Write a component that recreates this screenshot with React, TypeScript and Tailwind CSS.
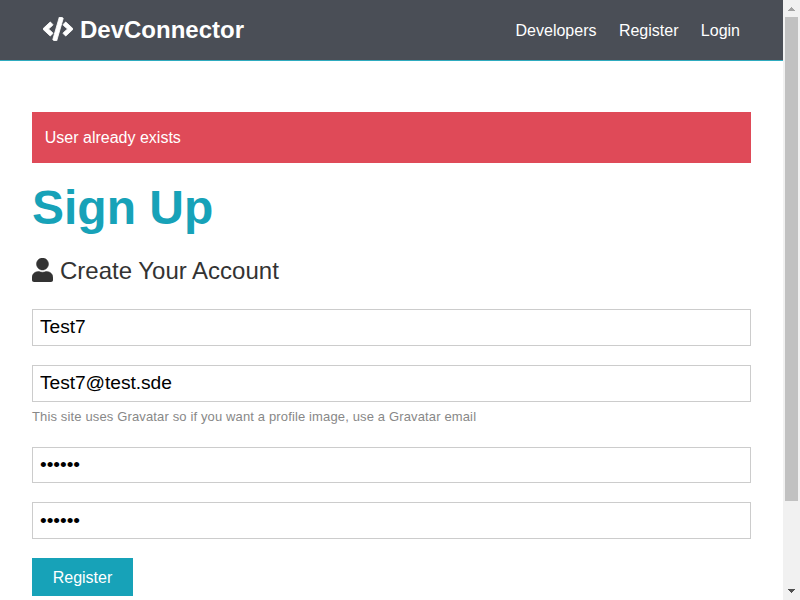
import { FaCode, FaUser } from "react-icons/fa";

const links = ["Developers", "Register", "Login"];
const inputClass =
  "block w-full border border-[#cccccc] bg-white px-[7px] text-[19.2px] leading-[22px] tracking-[-0.05px] text-black outline-none";

function Navbar() {
  return (
    <nav className="flex h-[61px] items-center justify-between border-b border-[#2eabbf] bg-[#4a4e56] px-[43px] text-white">
      <h1 className="flex items-center text-2xl font-bold">
        <FaCode className="mr-[7px] mb-[2px] h-6 w-[30px]" stroke="currentColor" strokeWidth={18} />
        DevConnector
      </h1>
      <ul className="flex gap-[22.4px] pt-[2px] text-base">
        {links.map((link) => (
          <li key={link}>
            <a>{link}</a>
          </li>
        ))}
      </ul>
    </nav>
  );
}

function Scrollbar() {
  return (
    <div className="flex w-[17px] shrink-0 flex-col items-center justify-between bg-[#f1f1f1]">
      <svg className="h-[17px] w-[17px] shrink-0" viewBox="0 0 17 17" shapeRendering="crispEdges">
        <path d="M8 7h1v1h1v1h1v1h1v1H5v-1h1V9h1V8h1z" fill="#a3a3a3" />
      </svg>
      <div className="mb-auto h-[484px] w-[13px] bg-[#c1c1c1]" />
      <svg className="h-[17px] w-[17px] shrink-0" viewBox="0 0 17 17" shapeRendering="crispEdges">
        <path d="M5 6h7v1h-1v1h-1v1H9v1H8V9H7V8H6V7H5z" fill="#505050" />
      </svg>
    </div>
  );
}

export default function App() {
  return (
    <div className="flex h-[600px] w-[800px] overflow-hidden bg-white font-['Liberation_Sans',Arial,sans-serif] text-[#333333]">
      <div className="min-w-0 flex-1">
        <Navbar />
        <main className="px-8 pt-[51px]">
          <div className="flex h-[51px] items-center bg-[#df4a58] px-[12.8px] text-base text-white">
            User already exists
          </div>
          <h1 className="mt-4 text-5xl font-bold leading-[57.6px] text-[#17a2b8]">Sign Up</h1>
          <p className="mt-[15px] flex h-[38px] items-center text-2xl">
            <FaUser className="mr-[7px] mb-[2px] h-6 w-[21px]" stroke="currentColor" strokeWidth={10} />
            Create Your Account
          </p>
          <form className="mt-[19px]">
            <input type="text" defaultValue="Test7" className={`${inputClass} h-[37px]`} />
            <input type="text" defaultValue="Test7@test.sde" className={`${inputClass} mt-[19px] h-[37px]`} />
            <small className="mt-[5px] block h-5 text-[13px] leading-5 tracking-[0.14px] text-[#888888]">
              This site uses Gravatar so if you want a profile image, use a Gravatar email
            </small>
            <input type="password" defaultValue="secret" className={`${inputClass} mt-5 h-9`} />
            <input type="password" defaultValue="secret" className={`${inputClass} mt-[19px] h-[37px] pt-[2px]`} />
            <button type="button" className="mt-[19px] block h-[38px] w-[101px] bg-[#17a2b8] pt-[2px] text-base text-white">
              Register
            </button>
          </form>
        </main>
      </div>
      <Scrollbar />
    </div>
  );
}
